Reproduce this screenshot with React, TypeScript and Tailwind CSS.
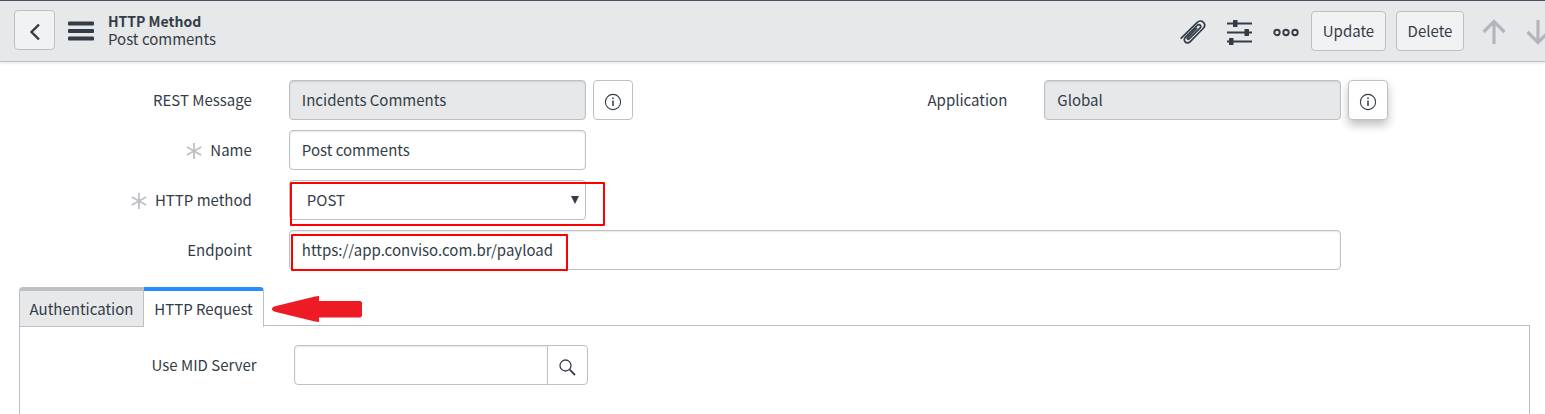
import React from "react";

const fieldBox =
  "h-10 w-full rounded border border-[#bdc0c4] px-3 pb-0.5 text-[#343d47] shadow-[inset_0_1px_2px_rgba(0,0,0,0.1)]";

function RequiredMark() {
  return (
    <svg viewBox="0 0 16 16" className="mt-0.5 h-4 w-4 shrink-0" stroke="#bdc0c4" strokeWidth="1.8" aria-hidden="true">
      <path d="M8 0v16M0.8 4l14.4 8M15.2 4L0.8 12" />
    </svg>
  );
}

function InfoIcon() {
  return (
    <svg viewBox="0 0 18 18" className="mt-1 h-[18px] w-[18px]" fill="none" stroke="#343d47" aria-hidden="true">
      <circle cx="9" cy="9" r="7.6" strokeWidth="1.1" />
      <path d="M9 7.5v5.5M9 4.5v1.6" strokeWidth="1.5" />
    </svg>
  );
}

function FieldLabel({ id, text, required, wide }: { id: string; text: string; required?: boolean; wide?: boolean }) {
  return (
    <div className={`${wide ? "w-1/6" : "w-1/3"} flex shrink-0 items-center justify-end gap-2 pr-[19px] leading-6`}>
      {required && <RequiredMark />}
      <label htmlFor={id} className="whitespace-nowrap">
        {text}
      </label>
    </div>
  );
}

function Row({
  id,
  label,
  required,
  wide,
  action,
  children,
}: {
  id: string;
  label: string;
  required?: boolean;
  wide?: boolean;
  action?: React.ReactNode;
  children: React.ReactNode;
}) {
  return (
    <div className={`${wide ? "w-full" : "w-1/2"} flex`}>
      <FieldLabel id={id} text={label} required={required} wide={wide} />
      <div className="flex min-w-0 flex-1 gap-[7px] pl-[18px] pr-[142px]">
        <div className="relative min-w-0 flex-1">{children}</div>
        <div className="w-10 shrink-0">{action}</div>
      </div>
    </div>
  );
}

function InfoButton({ raised }: { raised?: boolean }) {
  return (
    <button
      type="button"
      aria-label="Preview record"
      className={`flex h-10 w-10 items-center justify-center rounded border border-[#bdc0c4] bg-white ${
        raised ? "shadow-[0_5px_10px_rgba(0,0,0,0.25)]" : ""
      }`}
    >
      <InfoIcon />
    </button>
  );
}

function Header() {
  const button = "h-10 rounded border border-[#bdc0c4] bg-[#f1f2f4]";
  return (
    <header className="flex h-[62px] items-center overflow-hidden border-b border-t border-b-[#bdc0c4] border-t-[#485466] bg-[#e6e8ea] pl-3.5 shadow-[0_1px_3px_rgba(0,0,0,0.12)]">
      <button type="button" aria-label="Back" className={`${button} mb-0.5 flex w-[41px] shrink-0 items-center justify-center`}>
        <svg viewBox="0 0 12 18" className="mt-1 h-[18px] w-3" fill="none" stroke="#343d47" strokeWidth="2.4" aria-hidden="true">
          <path d="M10 1.5L2.5 9l7.5 7.5" />
        </svg>
      </button>
      <button type="button" aria-label="Menu" className="ml-[13px] shrink-0">
        <svg viewBox="0 0 26 20" className="h-5 w-[26px]" fill="#343d47" aria-hidden="true">
          <rect width="26" height="4" y="0.5" rx="1" />
          <rect width="26" height="4" y="8" rx="1" />
          <rect width="26" height="4" y="15.5" rx="1" />
        </svg>
      </button>
      <div className="ml-3.5 pb-[3px] text-[15px] leading-[18px]">
        <h1 className="text-[14px] font-bold">HTTP Method</h1>
        <p>Post comments</p>
      </div>
      <div className="-mr-[5px] ml-auto flex shrink-0 items-center">
        <button type="button" aria-label="Attachments" className="mt-0.5">
          <svg viewBox="0 0 26 26" className="h-[26px] w-[26px]" fill="none" stroke="#343d47" strokeWidth="1.7" strokeLinecap="round" aria-hidden="true">
            <path d="M1.2 19.2L17 3.7c2-2 4.7-2 6.400-.4 1.700 1.700 1.600 4.200-.3 6.200L10.500 22.300c-1.800 1.800-4 1.900-5.300.6s-1.200-3.300.5-5L17.200 6.500c1-1 2.200-1.100 3-.3s.7 1.900-.3 2.900L9.300 19.700c-.6.6-1.300.6-1.700.2s-.4-1 .2-1.600l8.700-8.800" />
          </svg>
        </button>
        <button type="button" aria-label="Personalize form" className="ml-[21px] mt-0.5">
          <svg viewBox="0 0 25 26" className="h-[26px] w-[25px]" fill="#343d47" aria-hidden="true">
            <path d="M0 3.500h25v2H0zM0 12.500h25v2H0zM0 21.500h25v2H0z" />
            <rect x="6" y="1" width="4.500" height="7" rx="0.500" />
            <rect x="17.500" y="10" width="4.500" height="7" rx="0.500" />
            <rect x="2" y="19" width="4.500" height="7" rx="0.500" />
          </svg>
        </button>
        <button type="button" aria-label="More options" className="ml-[21px] mt-0.5">
          <svg viewBox="0 0 26 10" className="h-2.5 w-[26px]" fill="none" stroke="#343d47" strokeWidth="1.9" aria-hidden="true">
            <circle cx="4" cy="5.500" r="2.700" />
            <circle cx="13" cy="5.500" r="2.700" />
            <circle cx="22" cy="5.500" r="2.700" />
          </svg>
        </button>
        <button type="button" className={`${button} ml-3 w-[75px]`}>
          Update
        </button>
        <button type="button" className={`${button} ml-2.5 w-[68px]`}>
          Delete
        </button>
        <button type="button" aria-label="Previous record" className="ml-[18px] mt-0.5">
          <svg viewBox="0 0 24 26" className="h-[26px] w-6" fill="none" stroke="#b1b7bc" strokeWidth="3.200" aria-hidden="true">
            <path d="M12 25V3M1.500 13L12 2.500 22.500 13" />
          </svg>
        </button>
        <button type="button" aria-label="Next record" className="ml-5 mt-0.5">
          <svg viewBox="0 0 24 26" className="h-[26px] w-6" fill="none" stroke="#b1b7bc" strokeWidth="3.200" aria-hidden="true">
            <path d="M12 1v22M1.500 13L12 23.500 22.500 13" />
          </svg>
        </button>
      </div>
    </header>
  );
}

export default function App() {
  return (
    <div className="flex min-h-screen flex-col overflow-hidden bg-white font-['Noto_Sans_CJK_SC','Noto_Sans',sans-serif] text-[15px] text-[#343d47]">
      <Header />
      <main className="flex flex-1 flex-col pl-[19px] pr-[15px] pt-[18px]">
        <form className="flex flex-col gap-2.5">
          <div className="flex">
            <Row id="rest-message" label="REST Message" action={<InfoButton />}>
              <input id="rest-message" readOnly defaultValue="Incidents Comments" className={`${fieldBox} bg-[#e6e8ea]`} />
            </Row>
            <Row id="application" label="Application" action={<InfoButton raised />}>
              <input id="application" readOnly defaultValue="Global" className={`${fieldBox} bg-[#e6e8ea]`} />
            </Row>
          </div>
          <Row id="name" label="Name" required>
            <input id="name" defaultValue="Post comments" className={fieldBox} />
          </Row>
          <Row id="method" label="HTTP method" required>
            <select
              id="method"
              defaultValue="POST"
              className="h-10 w-full appearance-none rounded border border-[#bdc0c4] bg-white px-[17px]"
            >
              <option>GET</option>
              <option>POST</option>
              <option>PUT</option>
              <option>DELETE</option>
            </select>
            <svg viewBox="0 0 8 8" className="pointer-events-none absolute right-[7px] top-4 h-2 w-2" fill="#343d47" aria-hidden="true">
              <path d="M0 0h8L4 8z" />
            </svg>
            <div className="pointer-events-none absolute -right-[19px] left-px top-0.5 h-11 rounded-[1px] border-2 border-[#fe0000]" />
          </Row>
          <Row id="endpoint" label="Endpoint" wide>
            <input id="endpoint" defaultValue="https://app.conviso.com.br/payload" className={fieldBox} />
            <div className="pointer-events-none absolute left-0.5 top-1 h-[37px] w-[277px] rounded-[1px] border-2 border-[#fe0000]" />
          </Row>
        </form>

        <section className="mt-[17px] flex flex-1 flex-col">
          <div className="flex items-start">
            <div role="tablist" className="relative z-10 -mb-0.5 flex">
              <button
                type="button"
                role="tab"
                aria-selected="false"
                className="h-10 w-[125px] rounded-tl border border-t-4 border-[#bdc0c4] bg-[#e6e8ea] pt-0.5"
              >
                Authentication
              </button>
              <button
                type="button"
                role="tab"
                aria-selected="true"
                className="h-10 w-[120px] rounded-tr border-r border-t-4 border-r-[#bdc0c4] border-t-[#278efc] bg-white pb-px pt-0.5"
              >
                HTTP Request
              </button>
            </div>
            <svg viewBox="0 0 90 28" className="ml-2 mt-2 h-7 w-[90px]" fill="#ed1c24" aria-hidden="true">
              <path d="M0 14q0-2 4-3L43 1.500 47 1v5h41.500l1.500 1.500v13.500l-1.500 1.500H47V27l-4-.5L4 17q-4-1-4-3z" />
            </svg>
          </div>
          <div role="tabpanel" className="flex-1 border border-b-0 border-[#bdc0c4] pb-7 pl-[5px] pt-[19px]">
            <Row id="mid-server" label="Use MID Server">
              <div className="flex">
                <input
                  id="mid-server"
                  className="h-10 min-w-0 flex-1 rounded-l border border-[#bdc0c4] px-3 shadow-[inset_0_1px_2px_rgba(0,0,0,0.1)]"
                />
                <button
                  type="button"
                  aria-label="Look up MID Server"
                  className="-ml-px flex h-10 w-[41px] shrink-0 items-center justify-center rounded-r border border-[#bdc0c4] bg-white"
                >
                  <svg viewBox="0 0 17 17" className="mt-1 h-[17px] w-[17px]" fill="none" stroke="#343d47" aria-hidden="true">
                    <circle cx="6.500" cy="6.500" r="5.500" strokeWidth="1.300" />
                    <path d="M10.700 10.700L16 16" strokeWidth="1.800" />
                  </svg>
                </button>
              </div>
            </Row>
          </div>
        </section>
      </main>
    </div>
  );
}
